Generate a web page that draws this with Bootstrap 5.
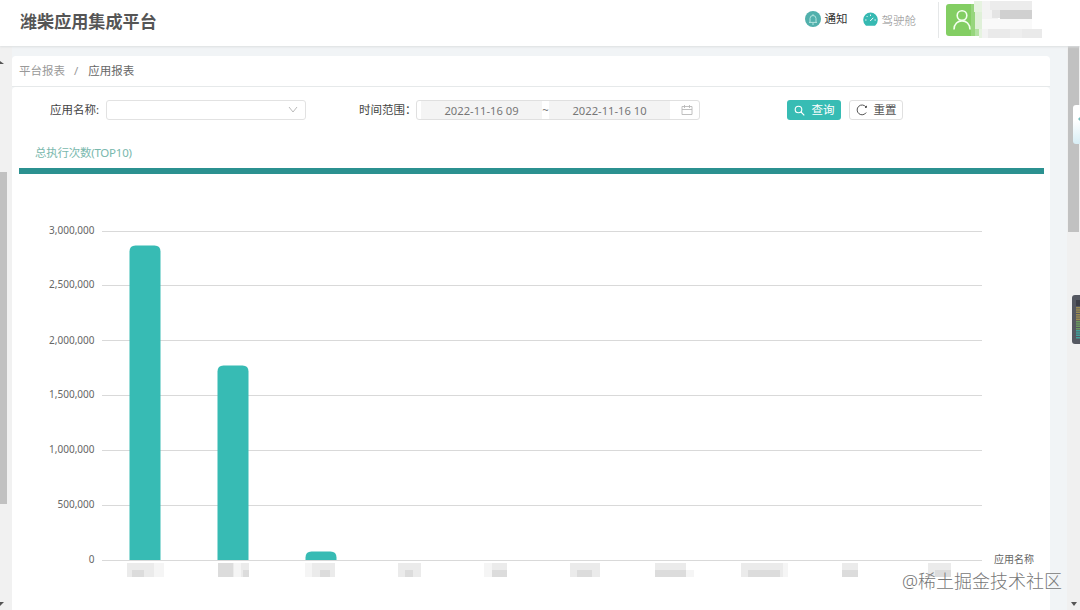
<!DOCTYPE html>
<html lang="zh-CN">
<head>
<meta charset="utf-8">
<meta name="viewport" content="width=device-width, initial-scale=1">
<title>潍柴应用集成平台</title>
<link href="https://cdn.jsdelivr.net/npm/bootstrap@5.3.0/dist/css/bootstrap.min.css" rel="stylesheet">
<style>
body{font-family:"Noto Sans","Noto Sans CJK SC",sans-serif;font-size:11.5px;line-height:16px;color:#555;background:#f1f4f6;height:610px;overflow:hidden}
.topbar{height:46px;box-shadow:0 1px 2px #dcdfe0;padding-left:20px;z-index:2}
.brand{font-size:17.1px;font-weight:700;color:#555;line-height:24px;margin-top:-2px}
.notice{color:#333;margin-right:15px;margin-top:-8px}
.cockpit{color:#8c8c8c;margin-right:22px;margin-top:-8px;font-weight:300}
.user-box{width:142px;height:36px;border-left:1px solid #e5e7e8;padding-left:7px;margin-top:-6px}
.avatar{width:32px;height:32px;background:#83ce63;border-radius:3px 0 0 3px}
.workspace{height:564px}
.side-rail{width:12px;background:#f1f1f1}
.side-thumb{width:7px;height:332px;background:#c1c1c1;margin-top:126px}
.crumbs{height:31px;padding-left:7px;color:#999;border-bottom:1px solid #e6e9ea;border-radius:4px 4px 0 0}
.crumbs .current{color:#666}
.panel{width:1038px;margin-top:10px}
.sheet{height:524px;border-radius:4px 4px 0 0}
.filters{height:46px;padding-left:38px}
.filters label{color:#444;width:56px;white-space:nowrap}
.pick{width:200px;height:20px;border:1px solid #e2e2e2;border-radius:3px;padding-right:7px}
.range{width:284px;height:20px;border:1px solid #e0e0e0;border-radius:3px;margin-left:1px;padding-left:4px;color:#777;font-size:11.2px}
.range .slot{width:121px;height:18px;line-height:20px;background:#f4f4f4;text-align:center}
.act{height:20px;border-radius:3px;font-size:11.5px;line-height:18px}
.act-query{width:54px;background:#37bcb4;color:#fff;margin-left:87px}
.act-reset{width:54px;border:1px solid #e0e0e0;color:#555;margin-left:8px}
.tab-title{height:35px;padding:12px 0 0 23px;color:#79b8ad;letter-spacing:-.25px}
.rule{height:6px;background:#2b9190;margin:0 6px 0 7px}
.chart text{font-family:"Noto Sans","Noto Sans CJK SC",sans-serif;font-size:10px;fill:#666}
.scroll-rail{width:13px;background:#f0f0f0}
.scroll-thumb{width:11px;height:186px;background:#c1c1c1;margin:0 0 0 1px}
.watermark{right:18px;bottom:17px;font-size:18px;line-height:24px;color:#777;font-weight:300}
.drawer-tab{right:0;top:105px;width:7px;height:39px;background:linear-gradient(#fff 40%,#d8eef6);border-radius:3px 0 0 3px}
.meter{right:0;top:295px}
.arrow{line-height:0}
</style>
</head>
<body class="position-relative">
<header class="topbar bg-white d-flex align-items-center position-relative">
  <h1 class="brand mb-0">潍柴应用集成平台</h1>
  <div class="notice d-flex align-items-center ms-auto">
    <svg class="me-1" width="16" height="16" viewBox="0 0 16 16"><circle cx="8" cy="8" r="8" fill="#51b0ac"/><path d="M4 11.400h8M5 11.500V7.500a3 3 0 0 1 6 0v4M7 13h2M8 3.200v1.300" fill="none" stroke="#b4e4df" stroke-width="1"/></svg>通知
  </div>
  <div class="cockpit d-flex align-items-center">
    <svg style="margin-right:4px" width="15" height="15" viewBox="0 0 15 15"><path d="M2.5 13.2A7.3 7.3 0 1 1 12.5 13.2Q12 13.7 11 13.7H4Q3 13.7 2.5 13.2Z" fill="#36b9b2"/><path d="M7.2 9L10.3 5.8M7.5 2.6v1.3M3.7 4.1l.9.9M2.2 8h1.3M11.5 8h1.3" stroke="#fff" fill="none"/></svg><span style="padding-top:3px">驾驶舱</span>
  </div>
  <div class="user-box d-flex align-items-center">
    <div class="avatar"><svg class="d-block" width="96" height="38" viewBox="0 0 96 38" style="overflow:visible;margin-top:-3px">
      <g fill="none" stroke="#f4fff0" stroke-width="1.6"><circle cx="16" cy="14.5" r="4.800"/><path d="M8 28.500C8 17 24 17 24 28.500"/></g>
      <path fill="#97d67d" d="M25 3h4v32h-4z"/><path fill="#b5e2a4" d="M29 3h4v32h-4z"/><path fill="#dff0d8" d="M29 11h7v17h-7z"/><path fill="#e6f3e0" d="M28 0h8v11h-8zM33 28h6v9h-6z"/>
      <path fill="#f3f3f3" d="M36 0h16v37H36z"/><path fill="#ececec" d="M44 0h42v9H44z"/><path fill="#d0d0d0" d="M54 9h32v9H54z"/><path fill="#e4e4e4" d="M46 9h8v8h-8z"/><path fill="#f9f9f9" d="M36 18h50v10H36z"/><path fill="#eaeaea" d="M42 28h22v9H42zM76 28h20v9H76z"/><path fill="#eee" d="M64 28h12v9H64z"/>
    </svg></div>
  </div>
</header>
<div class="workspace d-flex">
  <aside class="side-rail d-flex flex-column flex-shrink-0">
    <svg class="arrow position-absolute" style="top:61px" width="4" height="4"><path d="M0 0L4 3H0z" fill="#555"/></svg>
    <div class="side-thumb"></div>
    <svg class="mt-auto mb-1" width="4" height="4"><path d="M0 0H4L0 4z" fill="#555"/></svg>
  </aside>
  <main class="panel">
    <nav class="crumbs bg-white d-flex align-items-center"><span>平台报表</span><span style="margin:0 10px 0 9px">/</span><span class="current">应用报表</span></nav>
    <section class="sheet bg-white">
      <form class="filters d-flex align-items-center">
        <label>应用名称:</label>
        <div class="pick d-flex align-items-center justify-content-end"><svg width="10" height="8" viewBox="0 0 10 8"><path d="M1 1l4 5 4-5" fill="none" stroke="#bbb"/></svg></div>
        <label style="margin-left:53px">时间范围：</label>
        <div class="range d-flex align-items-center"><span class="slot">2022-11-16 09</span><span class="text-center" style="width:7px">~</span><span class="slot">2022-11-16 10</span>
          <svg style="margin-left:11px" width="12" height="12" viewBox="0 0 12 12"><path d="M1 2.500h10v8H1zM1 5.500h10M3.500 1v3M8.500 1v3" fill="none" stroke="#b9b9b9" stroke-width=".9"/></svg></div>
        <button type="button" class="btn act act-query p-0 d-flex align-items-center justify-content-center"><svg style="margin-right:7px" width="11" height="11" viewBox="0 0 11 11"><g fill="none" stroke="#fff" stroke-width="1.1"><circle cx="4.500" cy="4.500" r="3.300"/><path d="M7 7l3.300 3.300"/></g></svg>查询</button>
        <button type="button" class="btn act act-reset p-0 d-flex align-items-center justify-content-center"><svg style="margin-right:6px" width="12" height="12" viewBox="0 0 12 12"><path d="M10 3A4.900 4.900 0 1 0 10.200 8.500M10.500 1.800V3.500H9" fill="none" stroke="#555"/></svg>重置</button>
      </form>
      <div class="tab-title">总执行次数(TOP10)</div>
      <div class="rule"></div>
      <svg class="chart d-block" width="1038" height="436" viewBox="12 174 1038 436">
        <path d="M102 231.5h880M102 285.5h880M102 340.5h880M102 395.5h880M102 450.5h880M102 505.5h880M102 560.5h880" stroke="#d9d9d9"/>
        <g fill="#37bbb4"><path d="M129.500 560V251.500q0-6 6-6h19q6 0 6 6v308.500z"/><path d="M217.500 560V371.500q0-6 6-6h19q6 0 6 6v188.500z"/><path d="M305.500 560v-2.500q0-6 6-6h19q6 0 6 6v2.500z"/></g>
        <g text-anchor="end"><text x="94.500" y="234">3,000,000</text><text x="94.500" y="288">2,500,000</text><text x="94.500" y="343.500">2,000,000</text><text x="94.500" y="398">1,500,000</text><text x="94.500" y="453">1,000,000</text><text x="94.500" y="508">500,000</text><text x="94.500" y="563">0</text></g>
        <text x="994" y="563">应用名称</text>
        <g fill="#ebebeb"><path d="M127 563h37v14h-37zM218 563h31v14h-31zM305 563h30v14h-30zM398 563h23v14h-23zM484 563h23v14h-23zM570 563h30v14h-30zM655 563h31v14h-31zM741 563h42v14h-42zM842 563h16v14h-16zM928 563h23v14h-23z"/></g>
        <g fill="#f5f5f5"><path d="M154 563h10v14h-10zM234 563h7v14h-7zM305 563h7v14h-7zM484 563h8v14h-8zM686 570h8v7h-8zM783 563h5v14h-5z"/></g>
        <g fill="#dcdcdc"><path d="M132 570h12v7h-12zM218 563h15v14h-15zM243 570h6v7h-6zM320 570h10v7h-10zM405 570h8v7h-8zM492 570h15v7h-15zM577 570h15v7h-15zM655 570h31v7h-31zM748 570h32v7h-32zM842 570h16v7h-16zM935 570h16v7h-16z"/></g>
      </svg>
    </section>
  </main>
  <aside class="scroll-rail ms-auto d-flex flex-column">
    <div class="scroll-thumb"></div>
    <svg class="mt-auto" style="margin:0 0 4px 4px" width="6" height="4"><path d="M0 0H6L3 4z" fill="#555"/></svg>
  </aside>
</div>
<div class="drawer-tab position-absolute"><svg class="d-block" width="7" height="28"><path d="M7 12L5 14l2 2z" fill="#7bb"/></svg></div>
<svg class="meter position-absolute" width="8" height="49" viewBox="0 0 8 49"><path d="M8 0H3Q0 0 0 3v43q0 3 3 3h5z" fill="#555861"/><path d="M4 5h4v6H4z" fill="#3d3f48"/><path d="M6 12v14" stroke="#9c8b50" stroke-width="4" stroke-dasharray="1.500 .8"/><path d="M6 26v9" stroke="#6b9a60" stroke-width="4" stroke-dasharray="1.500 .8"/><path d="M6 35v9" stroke="#42a09b" stroke-width="4" stroke-dasharray="1.500 .8"/></svg>
<div class="watermark position-absolute">@稀土掘金技术社区</div>
<script src="https://cdn.jsdelivr.net/npm/bootstrap@5.3.0/dist/js/bootstrap.bundle.min.js"></script>
</body>
</html>
